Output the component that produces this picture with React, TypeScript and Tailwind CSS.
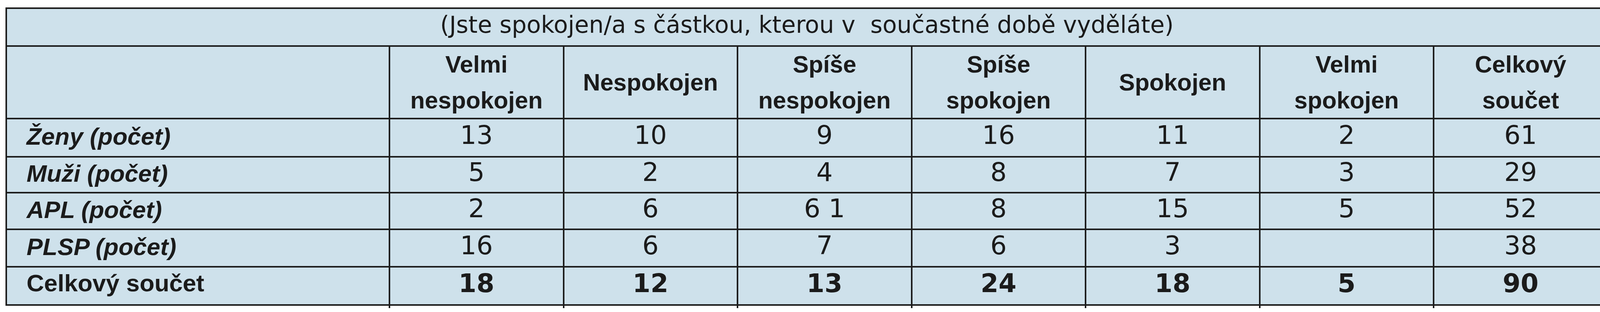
import React from "react";

const headers: string[][] = [
  ["Velmi", "nespokojen"],
  ["Nespokojen"],
  ["Spíše", "nespokojen"],
  ["Spíše", "spokojen"],
  ["Spokojen"],
  ["Velmi", "spokojen"],
  ["Celkový", "součet"],
];

const rows: { label: string; values: string[] }[] = [
  { label: "Ženy (počet)", values: ["13", "10", "9", "16", "11", "2", "61"] },
  { label: "Muži (počet)", values: ["5", "2", "4", "8", "7", "3", "29"] },
  { label: "APL (počet)", values: ["2", "6", "6 1", "8", "15", "5", "52"] },
  { label: "PLSP (počet)", values: ["16", "6", "7", "6", "3", "", "38"] },
];

const totals = ["18", "12", "13", "24", "18", "5", "90"];

export default function App() {
  return (
    <div className="min-h-[800px] w-[4141px] bg-white text-[#1b1b1b]">
      <div className="ml-[14px] pt-[19px]">
        <div className="grid w-max grid-cols-[977px_repeat(7,441.5px)] grid-rows-[93px_182px_94px_88px_90px_92px_94px] gap-[4px] bg-[#1d1d1d] p-[4px]">
          <div className="col-span-8 flex items-center justify-center bg-[#cee1eb] pb-[13px] font-['DejaVu_Sans',sans-serif] text-[60px] leading-none whitespace-pre">
            (Jste spokojen/a s částkou, kterou v{"\u00a0"} součastné době vyděláte)
          </div>

          <div className="bg-[#cee1eb]" />
          {headers.map((h, i) => (
            <div
              key={i}
              className="flex flex-col items-center justify-center bg-[#cee1eb] font-['Liberation_Sans',Arial,sans-serif] text-[61px] font-bold leading-[92px]"
            >
              {h.map((line, j) => (
                <span key={j}>{line}</span>
              ))}
            </div>
          ))}

          {rows.map((r) => (
            <React.Fragment key={r.label}>
              <div className="flex items-center bg-[#cee1eb] pb-[6px] pl-[50px] font-['Liberation_Sans',Arial,sans-serif] text-[62px] font-bold italic leading-none">
                {r.label}
              </div>
              {r.values.map((v, i) => (
                <div
                  key={i}
                  className="flex items-center justify-center bg-[#cee1eb] pb-[12px] font-['DejaVu_Sans',sans-serif] text-[66px] leading-none whitespace-pre"
                >
                  {v}
                </div>
              ))}
            </React.Fragment>
          ))}

          <div className="flex items-center bg-[#cee1eb] pb-[14px] pl-[50px] font-['Liberation_Sans',Arial,sans-serif] text-[62px] font-bold leading-none">
            Celkový součet
          </div>
          {totals.map((v, i) => (
            <div
              key={i}
              className="flex items-center justify-center bg-[#cee1eb] pb-[12px] font-['DejaVu_Sans',sans-serif] text-[66px] font-bold leading-none"
            >
              {v}
            </div>
          ))}
        </div>

        <div className="flex h-[6px] pl-[4px]">
          <div className="w-[977px]" />
          {[0, 1, 2, 3, 4, 5, 6].map((i) => (
            <React.Fragment key={i}>
              <div className="w-[4px] bg-[#1d1d1d]" />
              <div className="w-[441.5px]" />
            </React.Fragment>
          ))}
        </div>
      </div>
    </div>
  );
}
